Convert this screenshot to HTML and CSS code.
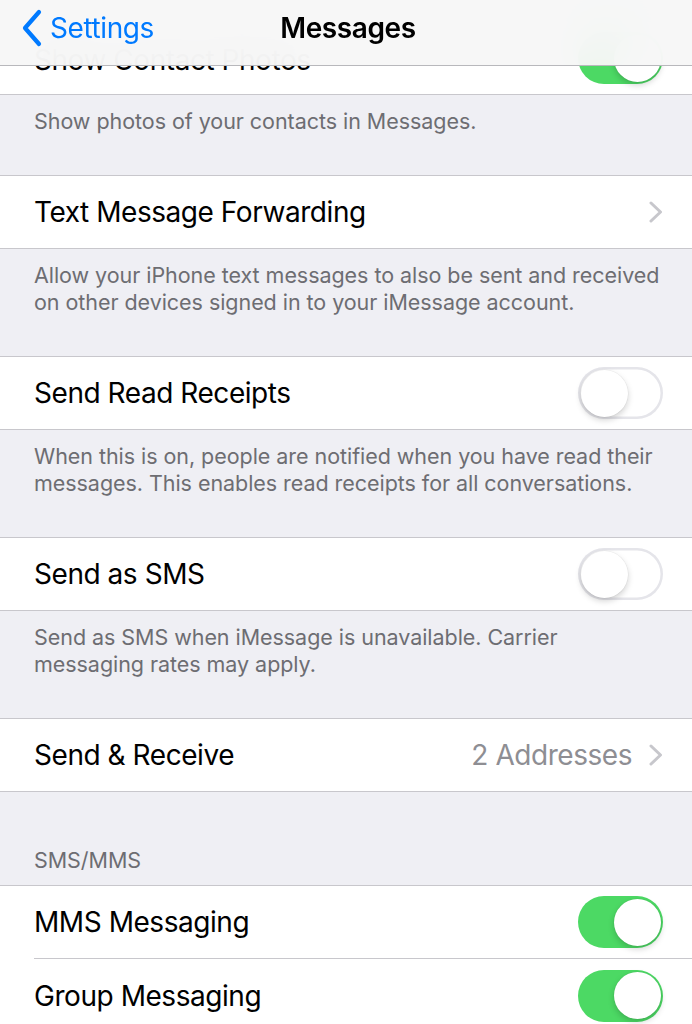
FILE: index.html
```html
<!DOCTYPE html>
<html>
<head>
<meta charset="utf-8">
<link rel="stylesheet" href="styles.css">
</head>
<body>
<div class="screen">
  <header class="navbar">
    <div class="back">
      <svg class="back-chevron" width="24" height="38" viewBox="0 0 24 38"><path d="M19 3 L5 19 L19 35" fill="none" stroke="#007aff" stroke-width="4.2" stroke-linecap="round" stroke-linejoin="round"/></svg>
      <span class="back-label">Settings</span>
    </div>
    <div class="title">Messages</div>
  </header>

  <main class="content">
    <section class="group first">
      <div class="row"><div class="row-inner"><span class="label hidden-label">Show Contact Photos</span><span class="switch on"><span class="knob"></span></span></div></div>
    </section>
    <p class="footer">Show photos of your contacts in Messages.</p>

    <section class="group">
      <div class="row"><div class="row-inner"><span class="label">Text Message Forwarding</span><svg class="chev" width="14" height="22" viewBox="0 0 14 22"><path d="M2 2 L11.5 11 L2 20" fill="none" stroke="#c7c7cc" stroke-width="3" stroke-linecap="round" stroke-linejoin="round"/></svg></div></div>
    </section>
    <p class="footer">Allow your iPhone text messages to also be sent and received on other devices signed in to your iMessage account.</p>

    <section class="group">
      <div class="row"><div class="row-inner"><span class="label">Send Read Receipts</span><span class="switch"><span class="knob"></span></span></div></div>
    </section>
    <p class="footer">When this is on, people are notified when you have read their messages. This enables read receipts for all conversations.</p>

    <section class="group">
      <div class="row"><div class="row-inner"><span class="label">Send as SMS</span><span class="switch"><span class="knob"></span></span></div></div>
    </section>
    <p class="footer">Send as SMS when iMessage is unavailable. Carrier messaging rates may apply.</p>

    <section class="group">
      <div class="row"><div class="row-inner"><span class="label">Send &amp; Receive</span><span class="detail">2 Addresses</span><svg class="chev" width="14" height="22" viewBox="0 0 14 22"><path d="M2 2 L11.5 11 L2 20" fill="none" stroke="#c7c7cc" stroke-width="3" stroke-linecap="round" stroke-linejoin="round"/></svg></div></div>
    </section>

    <h2 class="section-header">SMS/MMS</h2>
    <section class="group">
      <div class="row"><div class="row-inner"><span class="label">MMS Messaging</span><span class="switch on"><span class="knob"></span></span></div></div>
      <div class="row"><div class="row-inner"><span class="label">Group Messaging</span><span class="switch on"><span class="knob"></span></span></div></div>
    </section>
  </main>
</div>
</body>
</html>
```

FILE: styles.css
```css
* { box-sizing: border-box; }
html, body {
  margin: 0;
  padding: 0;
  background: #efeff4;
  font-family: Inter, "Noto Sans", "Liberation Sans", sans-serif;
  -webkit-font-smoothing: antialiased;
}
.screen {
  position: relative;
  width: 692px;
  height: 1024px;
  overflow: hidden;
  background: #efeff4;
}
.navbar {
  position: absolute;
  top: 0;
  left: 0;
  right: 0;
  height: 66px;
  background: rgba(247, 247, 247, 0.95);
  backdrop-filter: blur(20px);
  -webkit-backdrop-filter: blur(20px);
  border-bottom: 1px solid #b8b8bc;
  z-index: 10;
  display: flex;
  align-items: center;
  justify-content: center;
}
.back {
  position: absolute;
  left: 20px;
  top: 9px;
  display: flex;
  align-items: center;
  color: #007aff;
}
.back-chevron { display: block; }
.back-label {
  font-size: 28px;
  letter-spacing: -0.4px;
  margin-left: 6px;
  line-height: 38px;
}
.title {
  font-size: 28px;
  font-weight: 600;
  letter-spacing: -0.4px;
  color: #000;
  margin-top: -10px;
  margin-left: 4px;
}
.content {
  padding-top: 22px;
}
.group {
  background: #fff;
  border-top: 1px solid #c8c7cc;
  border-bottom: 1px solid #c8c7cc;
}
.group.first { border-top: none; }
.row {
  padding-left: 34px;
}
.row-inner {
  height: 72px;
  display: flex;
  align-items: center;
  padding-right: 29px;
}
.row + .row .row-inner {
  border-top: 1px solid #c8c7cc;
  height: 73px;
  padding-top: 1px;
}
.label {
  flex: 1;
  font-size: 28px;
  letter-spacing: -0.45px;
  color: #000;
}
.hidden-label {
  padding-top: 4px;
}
.detail {
  font-size: 28px;
  letter-spacing: -0.45px;
  color: #8e8e93;
  margin-right: 17px;
}
.chev { display: block; }
.switch {
  position: relative;
  width: 85px;
  height: 52px;
  border-radius: 26px;
  background: #fff;
  box-shadow: inset 0 0 0 2.5px #e5e5ea;
  flex: none;
}
.switch .knob {
  position: absolute;
  top: 2.5px;
  left: 2.5px;
  width: 47px;
  height: 47px;
  border-radius: 50%;
  background: #fff;
  box-shadow: 0 3px 6px rgba(0,0,0,0.18), 0 0 0 0.5px rgba(0,0,0,0.06);
}
.switch.on {
  background: #4cd964;
  box-shadow: none;
}
.switch.on .knob {
  left: auto;
  right: 2.5px;
}
.footer {
  margin: 0;
  padding: 13px 30px 40px 34px;
  font-size: 21.5px;
  line-height: 27px;
  letter-spacing: -0.05px;
  color: #6d6d72;
}
.section-header {
  margin: 0;
  padding: 55px 34px 11px;
  font-size: 21.5px;
  line-height: 27px;
  font-weight: 400;
  letter-spacing: -0.05px;
  color: #6d6d72;
}
```
